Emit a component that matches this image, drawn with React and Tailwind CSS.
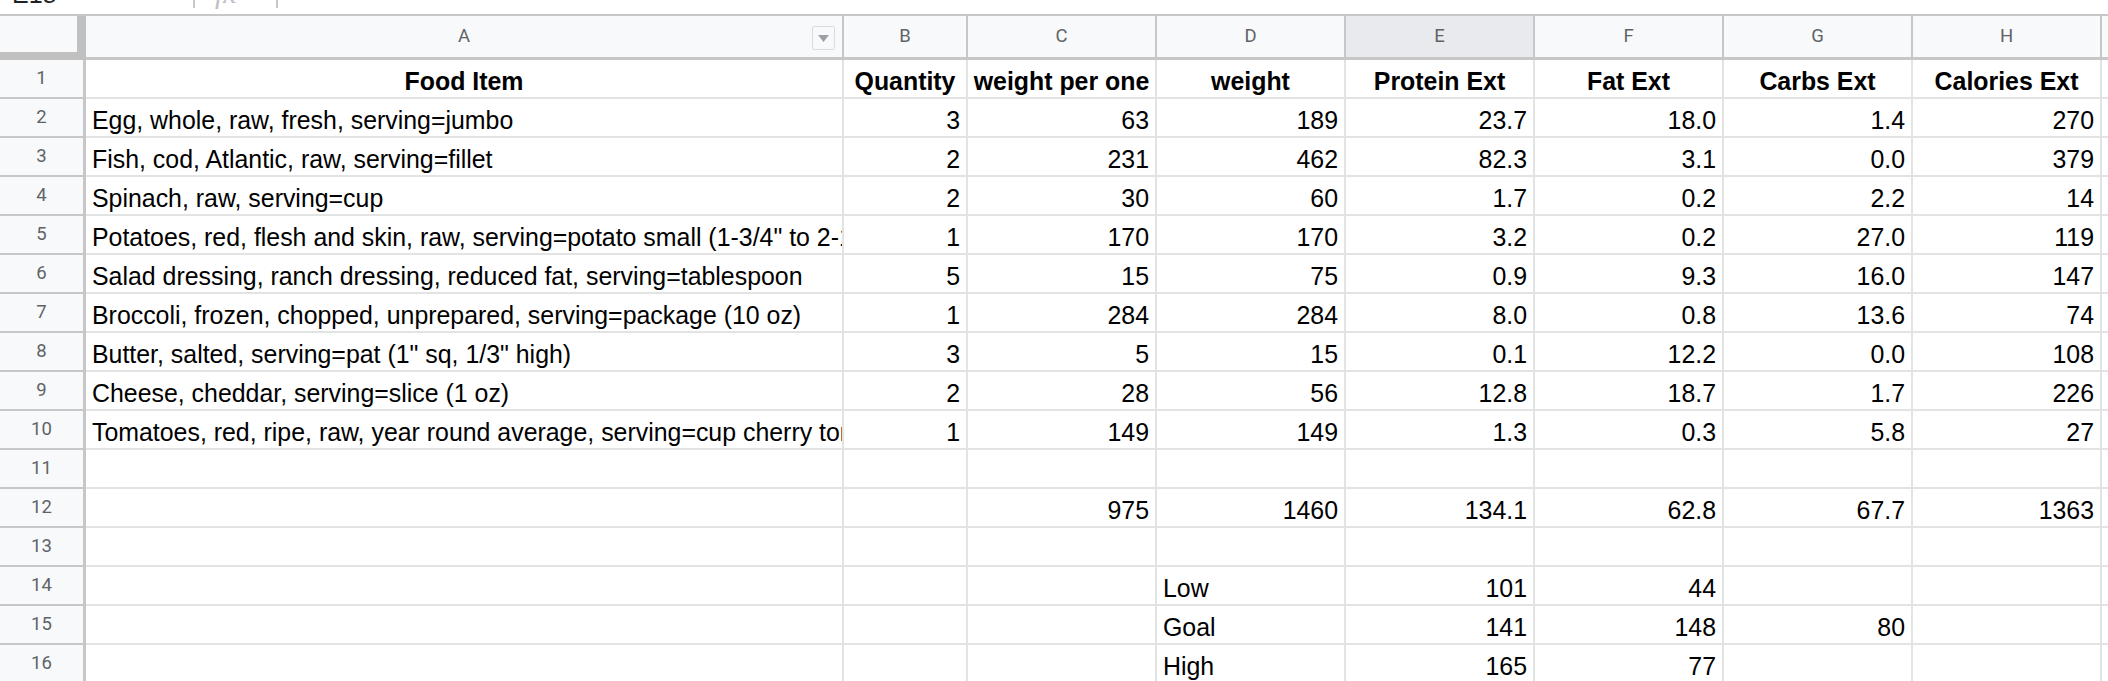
import React from 'react';

const letters = ['A', 'B', 'C', 'D', 'E', 'F', 'G', 'H', ''];

// food, qty, per one, weight, protein, fat, carbs, calories
const rows = [
  { n: 1, head: true, cells: ['Food Item', 'Quantity', 'weight per one', 'weight', 'Protein Ext', 'Fat Ext', 'Carbs Ext', 'Calories Ext'] },
  { n: 2, cells: ['Egg, whole, raw, fresh, serving=jumbo', '3', '63', '189', '23.7', '18.0', '1.4', '270'] },
  { n: 3, cells: ['Fish, cod, Atlantic, raw, serving=fillet', '2', '231', '462', '82.3', '3.1', '0.0', '379'] },
  { n: 4, cells: ['Spinach, raw, serving=cup', '2', '30', '60', '1.7', '0.2', '2.2', '14'] },
  { n: 5, cells: ['Potatoes, red, flesh and skin, raw, serving=potato small (1-3/4" to 2-1/2" dia.)', '1', '170', '170', '3.2', '0.2', '27.0', '119'] },
  { n: 6, cells: ['Salad dressing, ranch dressing, reduced fat, serving=tablespoon', '5', '15', '75', '0.9', '9.3', '16.0', '147'] },
  { n: 7, cells: ['Broccoli, frozen, chopped, unprepared, serving=package (10 oz)', '1', '284', '284', '8.0', '0.8', '13.6', '74'] },
  { n: 8, cells: ['Butter, salted, serving=pat (1" sq, 1/3" high)', '3', '5', '15', '0.1', '12.2', '0.0', '108'] },
  { n: 9, cells: ['Cheese, cheddar, serving=slice (1 oz)', '2', '28', '56', '12.8', '18.7', '1.7', '226'] },
  { n: 10, cells: ['Tomatoes, red, ripe, raw, year round average, serving=cup cherry tomatoes', '1', '149', '149', '1.3', '0.3', '5.8', '27'] },
  { n: 11, cells: ['', '', '', '', '', '', '', ''] },
  { n: 12, cells: ['', '', '975', '1460', '134.1', '62.8', '67.7', '1363'] },
  { n: 13, cells: ['', '', '', '', '', '', '', ''] },
  { n: 14, cells: ['', '', '', 'Low', '101', '44', '', ''] },
  { n: 15, cells: ['', '', '', 'Goal', '141', '148', '80', ''] },
  { n: 16, cells: ['', '', '', 'High', '165', '77', '', ''] },
];

const isNumber = (v) => /^-?[\d.]+$/.test(v);

const ColumnHeader = ({ letter }) => (
  <div
    className={`relative h-[44px] border-r-2 border-b-[3px] border-[#c7c7c7] flex items-center justify-center text-[18.5px] text-[#5f6368] ${
      letter === 'E' ? 'bg-[#e8eaed]' : 'bg-[#f8f9fa]'
    }`}
  >
    {letter}
    {letter === 'A' && (
      <div className="absolute right-[7px] top-[10px] w-[23px] h-[24px] border border-[#dadce0] rounded-[2px] flex items-center justify-center">
        <svg width="11" height="7" viewBox="0 0 11 7">
          <path d="M0 0h11L5.5 7z" fill="#9aa0a6" />
        </svg>
      </div>
    )}
  </div>
);

const Cell = ({ value, head }) => {
  const align = head ? 'justify-center font-bold' : isNumber(value) ? 'justify-end' : 'justify-start';
  return (
    <div
      className={`h-[39px] border-r-2 border-b-2 border-[#e2e3e3] flex items-end px-[6px] pb-[2px] overflow-hidden whitespace-nowrap text-[24.9px] leading-[28px] text-black ${align}`}
    >
      {value}
    </div>
  );
};

export default function App() {
  return (
    <div className="w-[2108px] h-[681px] overflow-hidden bg-white" style={{ fontFamily: '"Liberation Sans", Arial, sans-serif' }}>
      {/* formula bar, mostly scrolled off */}
      <div className="flex h-[16px] border-b-2 border-[#c7c7c7] overflow-hidden">
        <div className="w-[193px] pl-[12px] -mt-[20px] text-[25px] leading-[28px] text-[#202124]">E18</div>
        <div className="w-[2px] h-[8px] bg-[#c7c7c7]" />
        <div className="w-[81px] pl-[20px] -mt-[22px] text-[30px] leading-[30px] italic text-[#bdc1c6]" style={{ fontFamily: '"Liberation Serif", serif' }}>
          fx
        </div>
        <div className="w-[2px] h-[8px] bg-[#c7c7c7]" />
      </div>

      <div className="grid grid-cols-[86px_758px_124px_189px_189px_189px_189px_189px_189px_1fr]">
        {/* corner with frozen handles */}
        <div className="h-[44px] bg-[#f8f9fa] border-r-[9px] border-b-[8px] border-[#c0c0c0]" />
        {letters.map((l, i) => (
          <div key={i} style={{ fontFamily: 'Roboto, Arial, sans-serif' }}>
            <ColumnHeader letter={l} />
          </div>
        ))}

        {rows.map((r) => (
          <React.Fragment key={r.n}>
            <div
              className="h-[39px] bg-[#f8f9fa] border-r-[3px] border-b-2 border-[#c7c7c7] flex items-center justify-center text-[18.5px] text-[#5f6368]"
              style={{ fontFamily: 'Roboto, Arial, sans-serif' }}
            >
              {r.n}
            </div>
            {r.cells.map((c, i) => (
              <Cell key={i} value={c} head={r.head} />
            ))}
            <Cell value="" />
          </React.Fragment>
        ))}
      </div>
    </div>
  );
}
